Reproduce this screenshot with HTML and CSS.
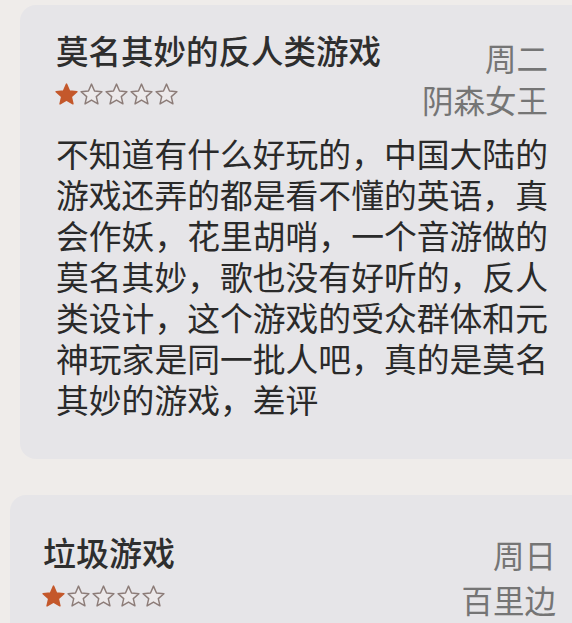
FILE: index.html
```html
<!DOCTYPE html>
<html lang="zh-CN">
<head>
    <meta charset="UTF-8">
    <meta name="viewport" content="width=device-width, initial-scale=1.0">
    <title>评分及评论</title>
    <link rel="stylesheet" href="styles.css">
</head>
<body>
    <svg width="0" height="0" class="defs">
        <symbol id="star" viewBox="0 0 24 24">
            <polygon points="12,2 14.9,8.6 22,9.3 16.6,14 18.2,21 12,17.3 5.8,21 7.4,14 2,9.3 9.1,8.6"/>
        </symbol>
    </svg>

    <div class="reviews">
        <div class="review review-first">
            <div class="review-head">
                <div class="review-main">
                    <h2 class="review-title">莫名其妙的反人类游戏</h2>
                    <div class="stars">
                        <svg class="star on"><use href="#star"/></svg>
                        <svg class="star"><use href="#star"/></svg>
                        <svg class="star"><use href="#star"/></svg>
                        <svg class="star"><use href="#star"/></svg>
                        <svg class="star"><use href="#star"/></svg>
                    </div>
                </div>
                <div class="review-meta">
                    <div class="review-date">周二</div>
                    <div class="review-author">阴森女王</div>
                </div>
            </div>
            <p class="review-body">不知道有什么好玩的，中国大陆的游戏还弄的都是看不懂的英语，真会作妖，花里胡哨，一个音游做的莫名其妙，歌也没有好听的，反人类设计，这个游戏的受众群体和元神玩家是同一批人吧，真的是莫名其妙的游戏，差评</p>
        </div>

        <div class="review review-second">
            <div class="review-head">
                <div class="review-main">
                    <h2 class="review-title">垃圾游戏</h2>
                    <div class="stars">
                        <svg class="star on"><use href="#star"/></svg>
                        <svg class="star"><use href="#star"/></svg>
                        <svg class="star"><use href="#star"/></svg>
                        <svg class="star"><use href="#star"/></svg>
                        <svg class="star"><use href="#star"/></svg>
                    </div>
                </div>
                <div class="review-meta">
                    <div class="review-date">周日</div>
                    <div class="review-author">百里边</div>
                </div>
            </div>
        </div>
    </div>
</body>
</html>
```

FILE: styles.css
```css
html, body { margin: 0; overflow: hidden; }
body { background: #efecea; font-family: "Noto Sans CJK SC", "Noto Sans", sans-serif; color: #2b2b2b; height: 623px; }
.defs { position: absolute; }

.reviews { display: flex; flex-direction: column; width: 600px; }
.review { background: #e6e5e8; border-radius: 16px; box-sizing: border-box; }
.review-first { margin: 5px 0 0 20px; padding: 25px 46px 40px 36px; width: 580px; }
.review-second { margin: 36px 0 0 10px; padding: 37px 44px 20px 33px; width: 590px; min-height: 140px; }

.review-head { display: flex; justify-content: space-between; align-items: flex-start; }
.review-main { display: flex; flex-direction: column; }
.review-title { margin: 0; font-size: 32.5px; line-height: 40px; font-weight: 500; color: #2e2e2e; }
.review-second .review-title { font-size: 33px; }
.stars { display: flex; margin: 12px 0 0 -2px; height: 25px; }
.star { width: 25px; height: 25px; fill: #ece9ea; stroke: #8c7c78; stroke-width: 1.4; stroke-linejoin: round; }
.star.on { fill: #c4582b; stroke: #c4582b; }

.review-meta { display: flex; flex-direction: column; align-items: flex-end; padding-top: 7px; margin-right: 6px; color: #757575; font-size: 31.5px; line-height: 40px; }
.review-author { margin-top: 2px; }
.review-second .review-meta { padding-top: 2px; margin-right: 0; }
.review-second .review-author { margin-top: 5px; }

.review-body { margin: 13px 0 0; font-size: 32.8px; line-height: 41px; color: #2a2a2a; }
```
